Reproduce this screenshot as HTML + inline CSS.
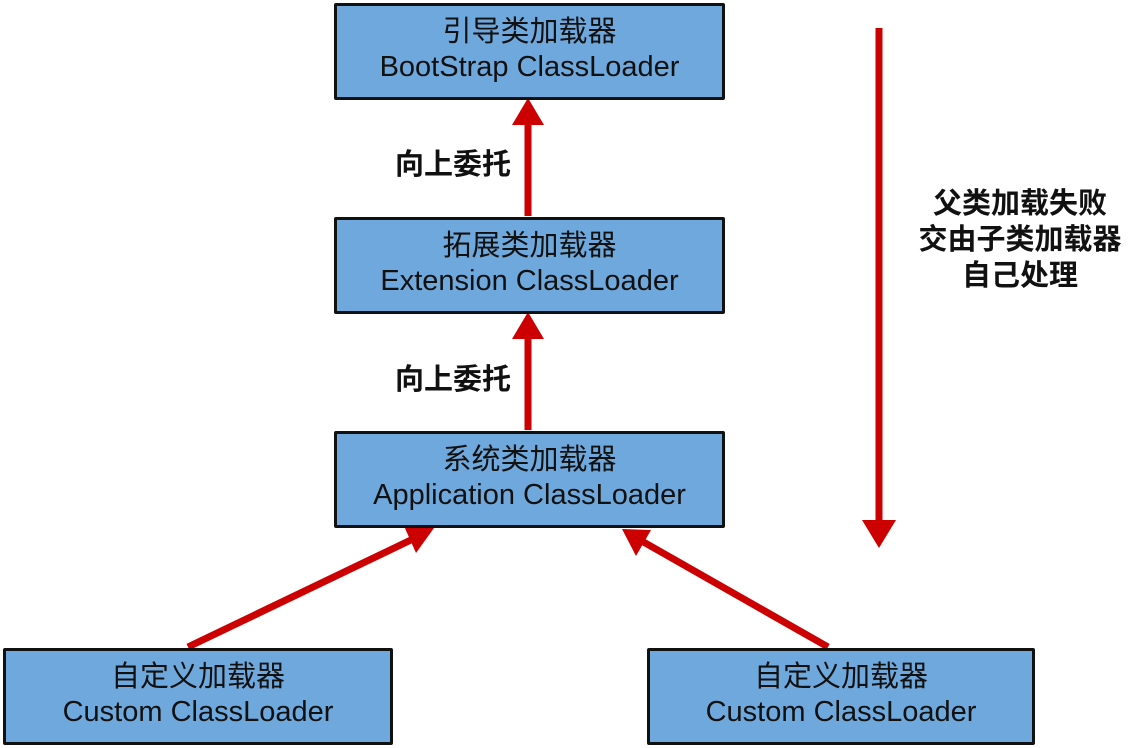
<!DOCTYPE html>
<html><head><meta charset="utf-8"><style>
body{margin:0;width:1140px;height:748px;background:#fff;position:relative;overflow:hidden;font-family:"Liberation Sans","Noto Sans CJK SC",sans-serif}
.b{position:absolute;background:#6fa8dc;border:3px solid #111;border-radius:2px;box-sizing:border-box;text-align:center;color:#111;font-size:29px;line-height:35px;padding-top:9px;white-space:nowrap}
.l{position:absolute;font-weight:bold;font-size:29px;color:#111;white-space:nowrap}
</style></head><body>
<svg width="1140" height="748" style="position:absolute;left:0;top:0">
<g stroke="#cc0000" stroke-width="7" fill="#cc0000">
<line x1="528" y1="216" x2="528" y2="120"/><polygon points="528,98 512,125 544,125" stroke="none"/>
<line x1="528" y1="430" x2="528" y2="334"/><polygon points="528,312 512,339 544,339" stroke="none"/>
<line x1="188" y1="647" x2="415" y2="538"/><polygon points="434,528 404,526 416,553" stroke="none"/>
<line x1="828" y1="647" x2="640" y2="540"/><polygon points="622,529 636,556 651,530" stroke="none"/>
<line x1="879" y1="28" x2="879" y2="528"/><polygon points="879,548 862,520 896,520" stroke="none"/>
</g></svg>
<div class="b" style="left:334px;top:3px;width:391px;height:97px">引导类加载器<br>BootStrap ClassLoader</div>
<div class="b" style="left:334px;top:217px;width:391px;height:97px">拓展类加载器<br>Extension ClassLoader</div>
<div class="b" style="left:334px;top:431px;width:391px;height:97px">系统类加载器<br>Application ClassLoader</div>
<div class="b" style="left:3px;top:648px;width:390px;height:97px">自定义加载器<br>Custom ClassLoader</div>
<div class="b" style="left:647px;top:648px;width:388px;height:97px">自定义加载器<br>Custom ClassLoader</div>
<div class="l" style="left:395px;top:141px">向上委托</div>
<div class="l" style="left:395px;top:356px">向上委托</div>
<div class="l" style="left:900px;top:186px;width:240px;text-align:center;line-height:36px">父类加载失败<br>交由子类加载器<br>自己处理</div>
</body></html>
